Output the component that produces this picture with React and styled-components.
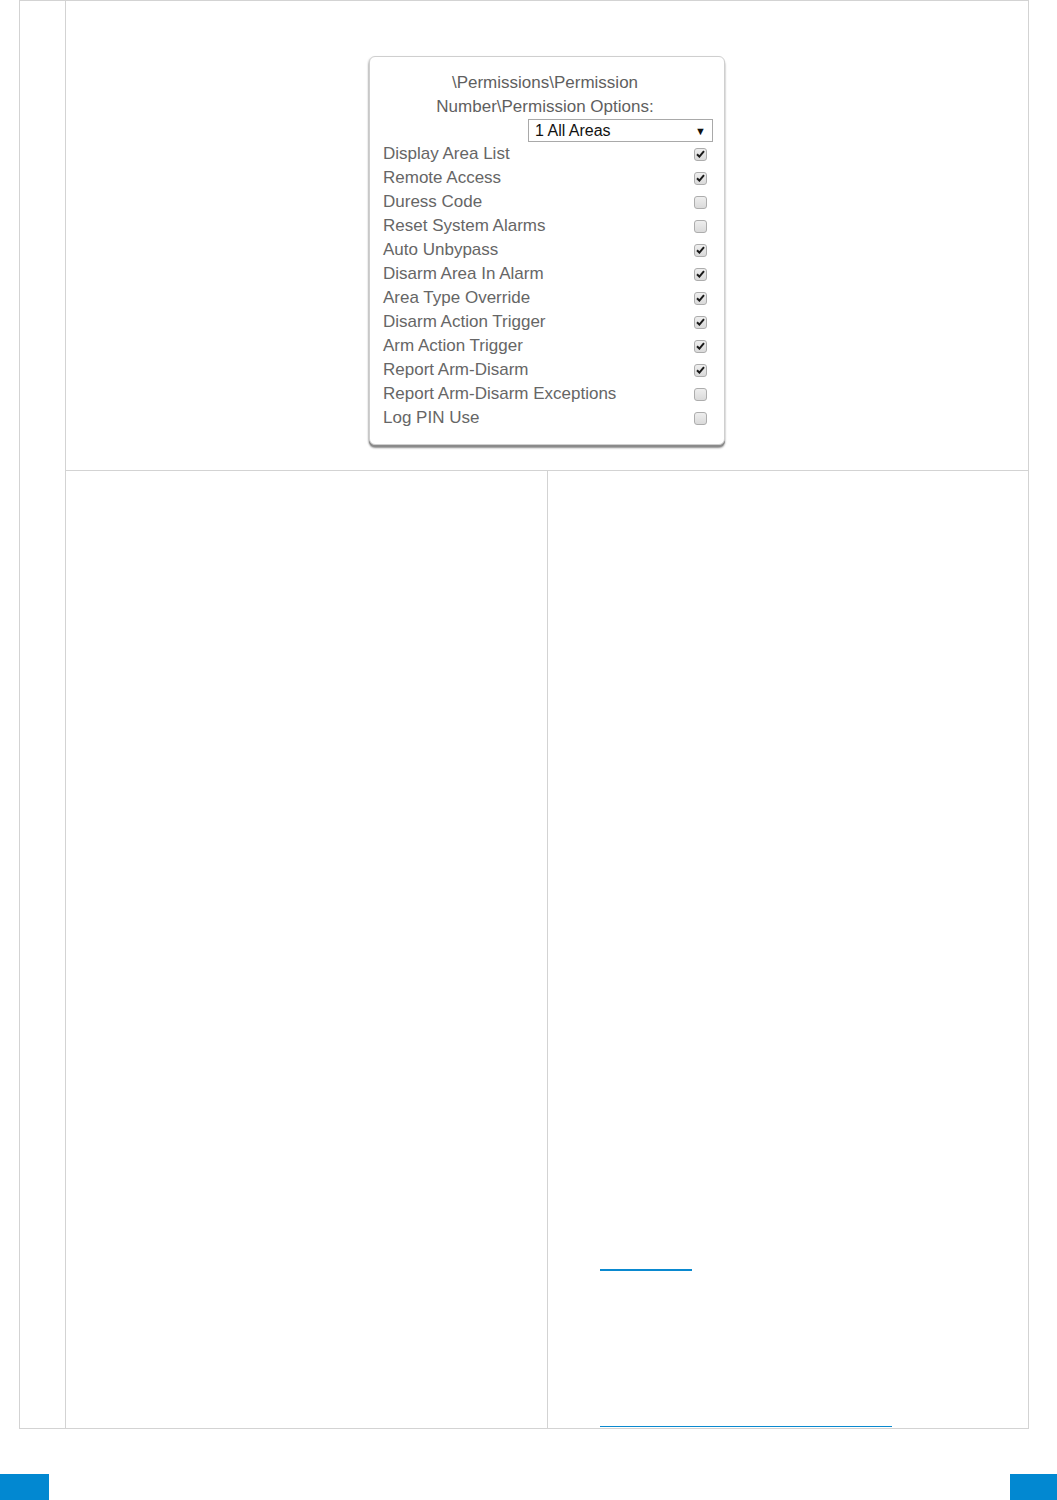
import React from "react";
import styled, { createGlobalStyle } from "styled-components";

const Global = createGlobalStyle`
  html, body { margin: 0; padding: 0; background: #fff; }
  body { font-family: "Liberation Sans", Arial, sans-serif; width: 1057px; }
`;

const Page = styled.div`
  width: 1057px;
  height: 1500px;
  display: flex;
  flex-direction: column;
`;

const Table = styled.div`
  margin-left: 19px;
  width: 1010px;
  box-sizing: border-box;
  display: grid;
  grid-template-columns: 45px 481px 480px;
  grid-template-rows: 469px 957px;
  gap: 1px;
  padding: 1px;
  background: #d3d3d3;
`;

const Cell = styled.div`
  background: #fff;
  grid-column: ${(p) => p.$col || "auto"};
  grid-row: ${(p) => p.$row || "auto"};
`;

const TopCell = styled(Cell)`
  display: flex;
  justify-content: center;
  align-items: flex-start;
  padding-top: 55px;
  box-sizing: border-box;
`;

const LinkCell = styled(Cell)`
  display: flex;
  flex-direction: column;
  align-items: flex-start;
  padding-left: 52px;
`;

const LinkLine = styled.span`
  display: block;
  width: ${(p) => p.$w}px;
  height: ${(p) => p.$h}px;
  margin-top: ${(p) => p.$mt}px;
  background: #0a89cf;
`;

const Panel = styled.div`
  width: 356px;
  box-sizing: border-box;
  border: 1px solid #cfcfcf;
  border-radius: 6px;
  background: #fff;
  padding: 14px 17px 14px 13px;
  box-shadow: 0 2px 0 #8a8a8a, 0 3px 2px rgba(0, 0, 0, 0.45), -1px 1px 2px rgba(0,0,0,0.15);
  color: #666;
  font-size: 17px;
`;

const Title = styled.div`
  text-align: center;
  line-height: 24px;
  color: #5f5f5f;
`;

const SelectRow = styled.div`
  display: flex;
  justify-content: flex-end;
  margin-right: -6px;
`;

const Select = styled.div`
  width: 185px;
  height: 23px;
  box-sizing: border-box;
  border: 1px solid #a9a9a9;
  display: flex;
  align-items: center;
  justify-content: space-between;
  padding: 0 6px 0 6px;
  color: #111;
  font-size: 16px;
`;

const Arrow = styled.span`
  font-size: 11px;
  color: #111;
`;

const Row = styled.div`
  display: flex;
  justify-content: space-between;
  align-items: center;
  height: 24px;
  line-height: 24px;
`;

const Box = styled.span`
  width: 13px;
  height: 13px;
  box-sizing: border-box;
  border: 1px solid #adadad;
  border-radius: 3px;
  background: linear-gradient(#eeeeee, #dadada);
  display: flex;
  align-items: center;
  justify-content: center;
`;

const Footer = styled.div`
  margin-top: 45px;
  display: flex;
  justify-content: space-between;
`;

const Tab = styled.div`
  width: ${(p) => p.$w}px;
  height: 26px;
  background: #0288d1;
`;

const items = [
  ["Display Area List", true],
  ["Remote Access", true],
  ["Duress Code", false],
  ["Reset System Alarms", false],
  ["Auto Unbypass", true],
  ["Disarm Area In Alarm", true],
  ["Area Type Override", true],
  ["Disarm Action Trigger", true],
  ["Arm Action Trigger", true],
  ["Report Arm-Disarm", true],
  ["Report Arm-Disarm Exceptions", false],
  ["Log PIN Use", false],
];

const Check = () => (
  <svg width="9" height="8" viewBox="0 0 9 8">
    <path d="M1 4.2 L3.4 6.6 L8 1.2" stroke="#1a1a1a" strokeWidth="2" fill="none" />
  </svg>
);

export default function App() {
  return (
    <Page>
      <Global />
      <Table>
        <Cell $row="1 / 3" />
        <TopCell $col="2 / 4">
          <Panel>
            <Title>
              \Permissions\Permission
              <br />
              Number\Permission Options:
            </Title>
            <SelectRow>
              <Select>
                <span>1 All Areas</span>
                <Arrow>▼</Arrow>
              </Select>
            </SelectRow>
            {items.map(([label, checked]) => (
              <Row key={label}>
                <span>{label}</span>
                <Box>{checked && <Check />}</Box>
              </Row>
            ))}
          </Panel>
        </TopCell>
        <Cell />
        <LinkCell>
          <LinkLine $w={92} $h={2} $mt={798} />
          <LinkLine $w={292} $h={1} $mt={155} />
        </LinkCell>
      </Table>
      <Footer>
        <Tab $w={49} />
        <Tab $w={47} />
      </Footer>
    </Page>
  );
}
